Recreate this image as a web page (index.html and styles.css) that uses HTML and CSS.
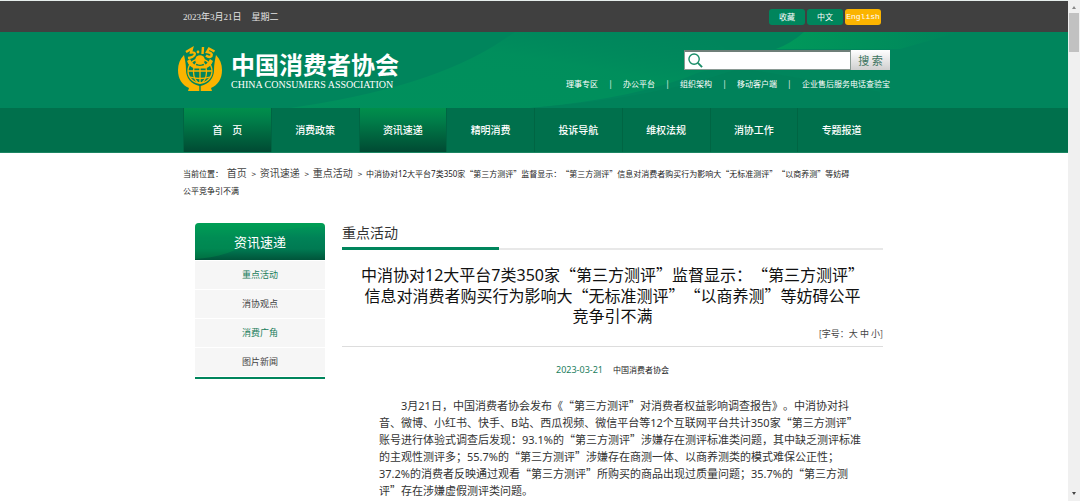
FILE: index.html
```html
<!DOCTYPE html>
<html lang="zh-CN">
<head>
<meta charset="utf-8">
<title>中国消费者协会</title>
<link rel="stylesheet" href="styles.css">
</head>
<body>
<div class="page">
  <div class="topbar">
    <div class="wrap topbar-row">
      <div class="today"><span>2023年3月21日</span><span>星期二</span></div>
      <div class="top-buttons">
        <button class="pill" type="button">收藏</button>
        <button class="pill" type="button">中文</button>
        <button class="pill pill-en" type="button">English</button>
      </div>
    </div>
  </div>

  <header class="header">
    <svg class="header-art" viewBox="0 0 1068 76" preserveAspectRatio="none" aria-hidden="true">
      <defs>
        <linearGradient id="sweep" x1="0" y1="1" x2="1" y2="0">
          <stop offset="0" stop-color="#00945c" stop-opacity=".7"/>
          <stop offset=".6" stop-color="#009a5c" stop-opacity=".45"/>
          <stop offset="1" stop-color="#00855c" stop-opacity="0"/>
        </linearGradient>
        <linearGradient id="sweep2" x1="0" y1="0" x2="1" y2="0">
          <stop offset="0" stop-color="#00995a"/>
          <stop offset="1" stop-color="#00855c"/>
        </linearGradient>
      </defs>
      <path d="M290 76 Q430 56 500 10 L515 0 L700 0 Q760 30 700 40 Q640 66 530 76Z" fill="url(#sweep)"/>
      <path d="M530 76 Q660 66 740 36 L880 60 L880 76Z" fill="#007f57" opacity=".5"/>
      <path d="M776 17 Q792 11 804 0 L960 0 L900 17Z" fill="url(#sweep2)"/>
    </svg>
    <div class="header-row">
      <a class="brand" href="#">
        <svg class="emblem" viewBox="0 0 44 46" aria-hidden="true">
          <g fill="#fbb400">
            <path d="M6 9C2 13 0 18 0 24C0 33 4 39 11 42L10 45H21.300V40C13 38 8 32 8 24C8 18 7 14 6 9Z"/>
            <path d="M38 9C42 13 44 18 44 24C44 33 40 39 33 42L34 45H22.700V40C31 38 36 32 36 24C36 18 37 14 38 9Z"/>
            <path d="M9 15L12 13Q15 20 22 20Q29 20 32 13L35 15Q33 21 27 22.500H17Q11 21 9 15Z"/>
          </g>
          <g fill="none" stroke="#fbb400" stroke-width="1.300">
            <circle cx="22" cy="25" r="12"/>
            <ellipse cx="22" cy="26" rx="6.500" ry="11"/>
            <path d="M22 20V38M10 25H34M12 31Q22 34 32 31"/>
          </g>
          <circle cx="22" cy="14" r="4.800" fill="#fbb400"/>
          <g fill="none" stroke="#fbb400" stroke-width="2.400">
            <path d="M8 6L14 2.500L13 6.500Q18 6 16.500 9Q15 11.500 10 12"/>
            <path d="M25 1L24.500 8"/>
            <path d="M36.500 5.500L31 2.500L29 6Q35 7 33.500 10Q31 12 28 9.500"/>
          </g>
          <circle cx="20" cy="6" r="1.400" fill="#fbb400"/>
        </svg>
        <span class="brand-text">
          <span class="brand-cn">中国消费者协会</span>
          <span class="brand-en">CHINA CONSUMERS ASSOCIATION</span>
        </span>
      </a>
      <div class="tools">
        <form class="search">
          <label class="search-box">
            <svg class="search-icon" viewBox="0 0 16 16" aria-hidden="true"><circle cx="6.500" cy="6.500" r="5.500" fill="none" stroke="#1a8d68" stroke-width="1.500"/><path d="M10.500 10.500L15 15" stroke="#1a8d68" stroke-width="2"/></svg>
            <input class="search-input" type="text" aria-label="搜索">
          </label>
          <button class="search-btn" type="button">搜 索</button>
        </form>
        <div class="quick">
          <a href="#">理事专区</a><span>|</span><a href="#">办公平台</a><span>|</span><a href="#">组织架构</a><span>|</span><a href="#">移动客户端</a><span>|</span><a href="#">企业售后服务电话查验宝</a>
        </div>
      </div>
    </div>
  </header>

  <nav class="nav">
    <div class="wrap nav-row">
      <a class="nav-item active" href="#">首　页</a>
      <a class="nav-item" href="#">消费政策</a>
      <a class="nav-item active" href="#">资讯速递</a>
      <a class="nav-item" href="#">精明消费</a>
      <a class="nav-item" href="#">投诉导航</a>
      <a class="nav-item" href="#">维权法规</a>
      <a class="nav-item" href="#">消协工作</a>
      <a class="nav-item" href="#">专题报道</a>
    </div>
  </nav>

  <div class="wrap">
    <div class="crumbs">当前位置： <a href="#">首页</a> &gt; <a href="#">资讯速递</a> &gt; <a href="#">重点活动</a> &gt; <span class="crumb-here">中消协对<span class="num">12</span>大平台<span class="num">7</span>类<span class="num">350</span>家“第三方测评”监督显示：“第三方测评”信息对消费者购买行为影响大“无标准测评”“以商养测”等妨碍</span><br>公平竞争引不满</div>

    <div class="columns">
      <aside class="side">
        <h2 class="side-title">
          <svg class="side-art" viewBox="0 0 130 37" preserveAspectRatio="none" aria-hidden="true"><path d="M0 36Q35 34 55 18Q85 3 130 4V0H0Z" fill="#00a651" opacity=".3"/></svg>
          <span class="side-label">资讯速递</span>
        </h2>
        <a class="side-item on" href="#">重点活动</a>
        <a class="side-item" href="#">消协观点</a>
        <a class="side-item on" href="#">消费广角</a>
        <a class="side-item" href="#">图片新闻</a>
      </aside>

      <main class="main">
        <div class="section"><h2 class="section-title">重点活动</h2></div>
        <h1 class="title">中消协对<span class="num">12</span>大平台<span class="num">7</span>类<span class="num">350</span>家“第三方测评”监督显示：“第三方测评”<br>信息对消费者购买行为影响大“无标准测评”“以商养测”等妨碍公平<br>竞争引不满</h1>
        <div class="sizes">[字号：<a href="#">大</a> <a href="#">中</a> <a href="#">小</a>]</div>
        <div class="meta"><span class="date">2023-03-21</span><span>中国消费者协会</span></div>
        <p class="article"><span class="num">3</span>月<span class="num">21</span>日，中国消费者协会发布《“第三方测评”对消费者权益影响调查报告》。中消协对抖<br>音、微博、小红书、快手、<span class="num">B</span>站、西瓜视频、微信平台等<span class="num">12</span>个互联网平台共计<span class="num">350</span>家“第三方测评”<br>账号进行体验式调查后发现：<span class="num">93.1%</span>的“第三方测评”涉嫌存在测评标准类问题，其中缺乏测评标准<br>的主观性测评多；<span class="num">55.7%</span>的“第三方测评”涉嫌存在商测一体、以商养测类的模式难保公正性；<br><span class="num">37.2%</span>的消费者反映通过观看“第三方测评”所购买的商品出现过质量问题；<span class="num">35.7%</span>的“第三方测<br>评”存在涉嫌虚假测评类问题。</p>
      </main>
    </div>
  </div>
</div>
<div class="scrollbar" aria-hidden="true">
  <span class="arrow arrow-up"></span>
  <span class="thumb"></span>
  <span class="arrow arrow-down"></span>
</div>
</body>
</html>
```
FILE: styles.css
```css
* { box-sizing: border-box; }
body {
  margin: 0;
  display: flex;
  height: 100vh;
  overflow: hidden;
  background: #fff;
  color: #333;
  font-family: "Noto Sans CJK SC", sans-serif;
  font-size: 9px;
  text-spacing-trim: space-all;
}
a { color: inherit; text-decoration: none; }
button { border: 0; padding: 0; font-family: inherit; cursor: pointer; }
h1, h2, p { margin: 0; font-weight: 400; }
.num { font-family: "Noto Sans", sans-serif; }
.page { flex: 1; min-width: 0; overflow: hidden; }
.wrap { max-width: 702px; margin: 0 auto; }

.topbar { background: #404040; border-top: 1px solid #e6eeec; color: #e4e4e4; }
.topbar-row { display: flex; justify-content: space-between; align-items: center; height: 31px; padding-right: 4px; }
.today { display: flex; gap: 10px; font-family: "Liberation Serif", "Noto Sans CJK SC", serif; }
.top-buttons { display: flex; gap: 2px; }
.pill { width: 36px; height: 16px; border-radius: 3px; background: #00855c; color: #fff; font-size: 8px; line-height: 16px; }
.pill-en { background: #fbb400; font-family: "Liberation Mono", monospace; }

.header { position: relative; background: #00855c; color: #fff; }
.header-art { position: absolute; inset: 0; width: 100%; height: 100%; }
.header-row { position: relative; display: flex; justify-content: space-between; max-width: 712px; height: 76px; margin: 0 auto; }
.brand { display: flex; align-items: center; gap: 9px; padding-bottom: 2px; }
.emblem { width: 44px; height: 46px; }
.brand-text { display: flex; flex-direction: column; padding-bottom: 1px; }
.brand-cn { font-size: 24px; line-height: 32px; font-weight: 700; }
.brand-en { font-family: "Liberation Serif", serif; font-size: 10px; line-height: 10px; }
.tools { width: 324px; padding-top: 18px; }
.search { display: flex; justify-content: flex-end; height: 20px; }
.search-box { display: flex; align-items: center; width: 167px; padding: 0 3px; background: #fff; border: 1px solid #8a9a94; border-top: 2px solid #6f7f79; }
.search-icon { width: 15px; height: 15px; flex: none; }
.search-input { flex: 1; min-width: 0; height: 100%; border: 0; outline: 0; background: none; font-size: 10px; }
.search-btn { width: 39px; background: linear-gradient(#fff, #cfcfcf); color: #3d7561; font-size: 11px; line-height: 20px; }
.quick { display: flex; justify-content: space-between; padding-top: 8px; font-size: 8px; line-height: 12px; }

.nav { background: #00704c; border-bottom: 1px solid #1b8562; color: #fff; }
.nav-row { display: grid; grid-template-columns: repeat(8, 1fr); }
.nav-item { border-left: 1px solid #006543; font-size: 10px; line-height: 44px; text-align: center; font-weight: 500; }
.nav-item.active { background: linear-gradient(#008f4b, #00804a 25%, #004a33); }

.crumbs { padding-top: 11px; font-size: 8px; line-height: 17px; color: #222; white-space: nowrap; }
.crumbs a { margin: 0 3px 0 2px; font-size: 10px; color: #444; }
.crumb-here { margin-left: 2px; }
.columns { display: flex; gap: 17px; padding: 24px 2px 0 12px; }
.side { width: 130px; flex: none; align-self: flex-start; border-bottom: 2px solid #00855c; }
.side-title { position: relative; height: 37px; border-radius: 4px 4px 0 0; overflow: hidden; background: linear-gradient(#009c58, #008257 40%, #007a52 70%, #00543a); color: #fff; text-align: center; font-size: 13px; line-height: 37px; }
.side-art { position: absolute; inset: 0; width: 100%; height: 100%; }
.side-label { position: relative; }
.side-item { display: block; margin: 1px 0; background: #f6f6f6; text-align: center; line-height: 28px; color: #444; }
.side-item.on { color: #1a7d5c; }

.main { flex: 1; min-width: 0; }
.section { display: flex; border-bottom: 2px solid #e8e8e8; }
.section-title { width: 157px; margin-bottom: -2px; border-bottom: 3px solid #00855c; padding-bottom: 5px; font-size: 14px; line-height: 19px; color: #333; }
.title { padding-top: 14px; text-align: center; font-size: 16px; line-height: 20px; color: #111; white-space: nowrap; }
.sizes { padding-bottom: 4px; border-bottom: 1px solid #ddd; text-align: right; line-height: 17px; color: #444; }
.meta { display: flex; justify-content: center; gap: 10px; padding-top: 14px; line-height: 17px; font-size: 8px; color: #222; }
.date { font-family: "Noto Sans", sans-serif; font-size: 9px; color: #1a7d5c; }
.article { padding: 19px 0 0 37px; text-indent: 22px; font-size: 11px; line-height: 17px; color: #333; white-space: nowrap; }

.scrollbar { display: flex; flex-direction: column; align-items: center; width: 12px; padding: 6px 0; background: #f0f0f0; }
.arrow { border: 2px solid transparent; }
.arrow-up { border-bottom: 3px solid #888; border-top: 0; }
.arrow-down { border-top: 3px solid #444; border-bottom: 0; margin-top: auto; }
.thumb { width: 10px; height: 39px; margin-top: 4px; background: #c1c1c1; }
```
